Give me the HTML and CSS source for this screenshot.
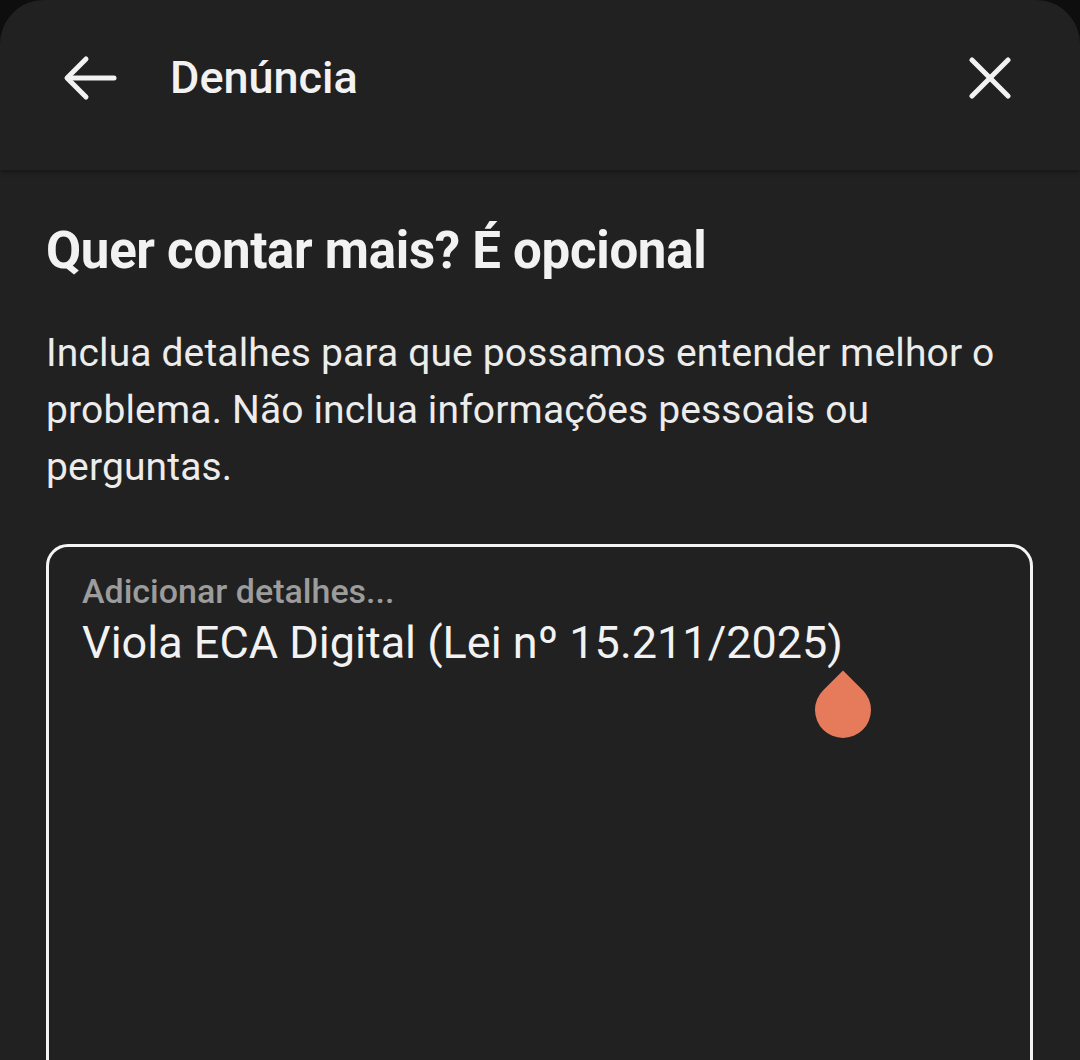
FILE: index.html
```html
<!DOCTYPE html>
<html lang="pt-BR">
<head>
  <meta charset="UTF-8" />
  <meta name="viewport" content="width=device-width, initial-scale=1.0"/>
  <title>Denúncia</title>
  <link rel="stylesheet" href="styles.css">
</head>
<body>

  <div class="sheet">
    <header class="topbar">
      <button class="icon-btn back" aria-label="Voltar">
        <svg width="56" height="46" viewBox="0 0 56 46" fill="none" stroke="#f2f2f2" stroke-width="5" stroke-linecap="round" stroke-linejoin="round">
          <path d="M52 23 H6"/>
          <path d="M24 4 L5 23 L24 42"/>
        </svg>
      </button>
      <h1 class="title">Denúncia</h1>
      <button class="icon-btn close" aria-label="Fechar">
        <svg width="42" height="42" viewBox="0 0 42 42" fill="none" stroke="#f2f2f2" stroke-width="5" stroke-linecap="round">
          <path d="M3 3 L39 39"/>
          <path d="M39 3 L3 39"/>
        </svg>
      </button>
    </header>

    <main class="content">
      <h2 class="heading">Quer contar mais? É opcional</h2>
      <p class="hint">Inclua detalhes para que possamos entender melhor o problema. Não inclua informações pessoais ou perguntas.</p>

      <div class="details">
        <label class="details-label">Adicionar detalhes...</label>
        <div class="details-text">Viola ECA Digital (Lei nº 15.211/2025)</div>
        <span class="cursor-handle"></span>
      </div>
    </main>
  </div>

</body>
</html>
```

FILE: styles.css
```css
body {
  margin: 0;
  background: #0e0e0e;
  font-family: Roboto, 'Noto Sans', sans-serif;
  color: #f2f2f2;
  overflow: hidden;
}

.sheet {
  background: #212121;
  border-radius: 44px 44px 0 0;
  height: 1060px;
  overflow: hidden;
}

.topbar {
  height: 170px;
  box-sizing: border-box;
  padding: 0 69px 14px 62px;
  display: flex;
  align-items: center;
  box-shadow: 0 2px 5px rgba(0,0,0,0.35);
}

.icon-btn {
  background: none;
  border: none;
  padding: 0;
  display: flex;
  cursor: pointer;
}

.title {
  margin: 0 0 0 52px;
  flex: 1;
  font-size: 45px;
  font-weight: 500;
  line-height: 52px;
}

.content {
  padding: 51px 47px 0 46px;
}

.heading {
  margin: 0;
  font-size: 51px;
  font-weight: 700;
  line-height: 60px;
  letter-spacing: -0.3px;
}

.hint {
  margin: 44px 0 0;
  font-size: 39px;
  line-height: 57px;
  color: #ececec;
  letter-spacing: 0.15px;
}

.details {
  position: relative;
  margin-top: 48px;
  height: 700px;
  border: 3px solid #f4f4f4;
  border-radius: 22px;
  padding: 24px 33px;
}

.details-label {
  display: block;
  font-size: 34px;
  font-weight: 500;
  color: #9c9c9c;
  line-height: 40px;
}

.details-text {
  margin-top: 7px;
  font-size: 45px;
  line-height: 50px;
  color: #f2f2f2;
}

.cursor-handle {
  position: absolute;
  left: 766px;
  top: 135px;
  width: 56px;
  height: 56px;
  background: #e57b5b;
  border-radius: 0 50% 50% 50%;
  transform: rotate(45deg);
}
```
